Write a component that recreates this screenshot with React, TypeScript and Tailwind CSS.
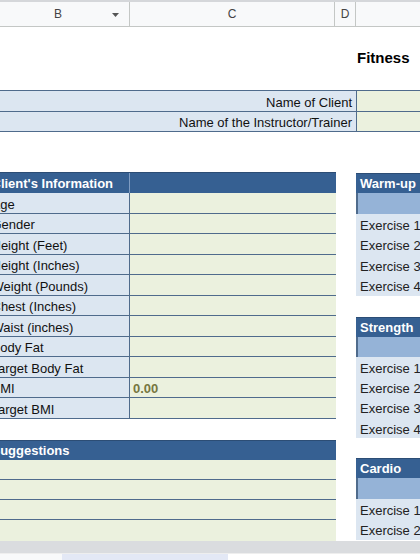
import React from "react";

const B = "border-[#4f6b8c]";

const clientRows = [
  "Age",
  "Gender",
  "Height (Feet)",
  "Height (Inches)",
  "Weight (Pounds)",
  "Chest (Inches)",
  "Waist (inches)",
  "Body Fat",
  "Target Body Fat",
  "BMI",
  "Target BMI",
];

function ExerciseBlock({ title, count, exH }: { title: string; count: number; exH: string }) {
  return (
    <div className="flex flex-col w-[120px]">
      <div className="h-[20px] bg-[#366092] text-white font-bold flex items-center pt-[1px] pl-[4px] border-t border-[#2c4d75]">
        {title}
      </div>
      <div className={`h-[20.5px] bg-[#95b3d7] border-l-2 ${B}`} />
      {Array.from({ length: count }).map((_, i) => (
        <div key={i} className={`${exH} bg-[#dce6f1] flex items-center pt-[3px] pl-[4px] text-[#222]`}>
          Exercise {i + 1}
        </div>
      ))}
    </div>
  );
}

export default function App() {
  return (
    <div
      className="w-[420px] h-[560px] overflow-hidden bg-white flex flex-col text-[13px] text-[#111]"
      style={{ fontFamily: '"Liberation Sans", Arial, sans-serif' }}
    >
      {/* column header */}
      <div className="h-[27px] shrink-0 border-t-2 border-t-[#d5d7da] border-b border-b-[#c4c7c5] bg-[#f8f9fa] flex text-[12px] text-[#444]">
        <div className="w-[130px] shrink-0 border-r border-[#c4c7c5] flex items-center relative">
          <span className="pl-[54px]">B</span>
          <svg className="absolute left-[112px] top-[11px]" width="7" height="4" viewBox="0 0 7 4">
            <polygon points="0,0 7,0 3.5,4" fill="#555" />
          </svg>
        </div>
        <div className="w-[205px] shrink-0 border-r border-[#c4c7c5] flex items-center justify-center">C</div>
        <div className="w-[21px] shrink-0 border-r border-[#c4c7c5] flex items-center justify-center">D</div>
        <div className="flex-1" />
      </div>

      <div className="flex-1 min-h-0 overflow-hidden flex flex-col">
        {/* title */}
        <div className="h-[63px] shrink-0 pl-[357px] pt-[22px]">
          <span className="text-[15px] leading-[17px] font-bold text-black whitespace-nowrap">Fitness</span>
        </div>

        {/* name rows */}
        <div className={`border-t ${B} shrink-0`}>
          {["Name of Client", "Name of the Instructor/Trainer"].map((t) => (
            <div key={t} className={`flex h-[20.5px] border-b ${B}`}>
              <div className={`w-[357px] shrink-0 bg-[#dce6f1] border-r ${B} flex items-center justify-end pt-[3px] pr-[4px] whitespace-nowrap`}>
                {t}
              </div>
              <div className="flex-1 bg-[#ebf1de]" />
            </div>
          ))}
        </div>

        {/* main */}
        <div className="flex mt-[40px] gap-[20px] shrink-0">
          {/* left */}
          <div className="-ml-[10px] w-[346px] shrink-0 flex flex-col">
            <div className="flex h-[21px] bg-[#366092] border-t border-[#2c4d75] text-white font-bold">
              <div className="w-[140px] shrink-0 border-r border-[#7f9cc2] flex items-center pt-[2px] pl-[1.5px] whitespace-nowrap">
                Client's Information
              </div>
              <div className="flex-1" />
            </div>
            {clientRows.map((r) => (
              <div key={r} className={`flex h-[20.5px] border-b ${B}`}>
                <div className={`w-[140px] shrink-0 bg-[#dce6f1] border-r ${B} flex items-center pt-[3px] pl-[1.5px] whitespace-nowrap`}>
                  {r}
                </div>
                <div className="flex-1 bg-[#ebf1de] flex items-center pt-[3px] pl-[3px] text-[#76773f] font-bold">
                  {r === "BMI" ? "0.00" : ""}
                </div>
              </div>
            ))}

            <div className="h-[21px]" />
            <div className="h-[20px] bg-[#366092] border-t border-[#2c4d75] text-white font-bold flex items-center pt-[2px] pl-[1.5px]">
              Suggestions
            </div>
            {[0, 1, 2, 3].map((i) => (
              <div key={i} className={`h-[20.25px] bg-[#ebf1de] ${i < 3 ? `border-b ${B}` : ""}`} />
            ))}
          </div>

          {/* right */}
          <div className="flex flex-col shrink-0 pt-[1px]">
            <ExerciseBlock title="Warm-up" count={4} exH="h-[20.5px]" />
            <div className="h-[21px]" />
            <ExerciseBlock title="Strength" count={4} exH="h-[20.25px]" />
            <div className="h-[20px]" />
            <ExerciseBlock title="Cardio" count={2} exH="h-[20.5px]" />
          </div>
        </div>
      </div>

      {/* bottom bar */}
      <div className="h-[12px] shrink-0 bg-[#dadcdf]" />
      <div className="h-[7px] shrink-0 flex border-t border-[#eeeeee]">
        <div className="w-[62px] bg-[#f8f9fa]" />
        <div className="w-[166px] bg-[#e3e8f5]" />
        <div className="flex-1 bg-white" />
      </div>
    </div>
  );
}
